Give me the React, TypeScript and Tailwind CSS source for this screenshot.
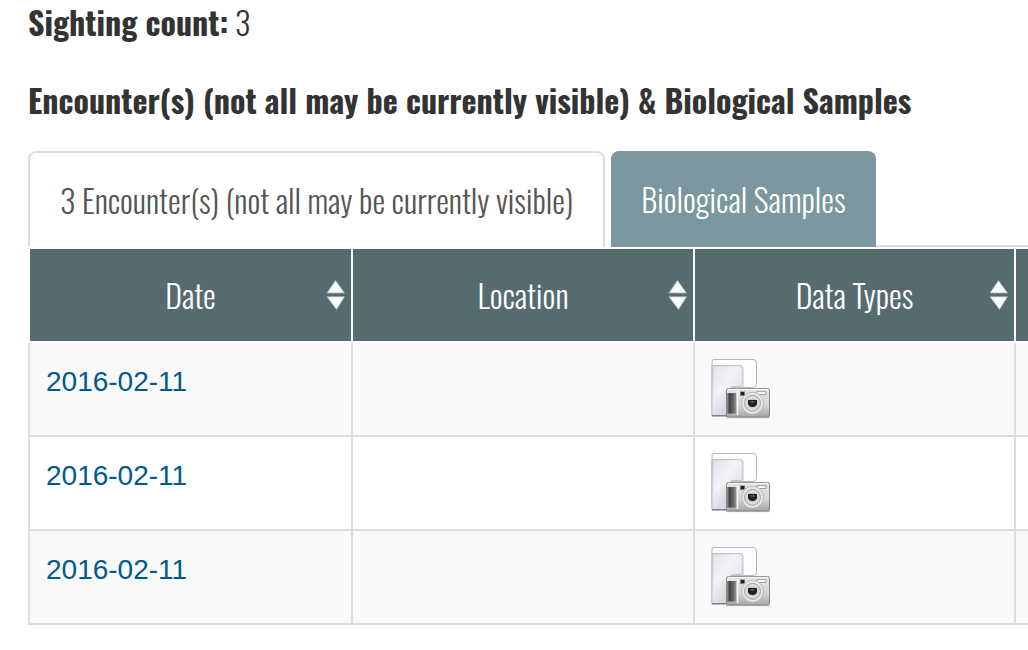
import { useState } from 'react'

const columns = ['Date', 'Location', 'Data Types']

const encounters = [
  { id: 1, date: '2016-02-11', location: '' },
  { id: 2, date: '2016-02-11', location: '' },
  { id: 3, date: '2016-02-11', location: '' },
]

const tabs = [
  { id: 'encounters', label: '3 Encounter(s) (not all may be currently visible)' },
  { id: 'samples', label: 'Biological Samples' },
]

function SortIcon() {
  return (
    <svg viewBox="0 0 20 30" className="h-[30px] w-5 justify-self-end" aria-hidden="true">
      <path d="M9.5 0.5 18.5 13H1z" fill="#fff" stroke="#a9b4b6" strokeWidth="0.8" />
      <path d="M1 16.8H18.5L10.5 29.5z" fill="#fff" stroke="#a9b4b6" strokeWidth="0.8" />
    </svg>
  )
}

function PhotoIcon({ id }: { id: number }) {
  return (
    <svg viewBox="11 9 60 60" className="block size-[60px]" role="img" aria-label="Photos">
      <defs>
        <linearGradient id={`page-${id}`} x1="0" y1="0" x2="1" y2="1">
          <stop offset="0" stopColor="#d0d0dc" />
          <stop offset="0.4" stopColor="#ececf2" />
          <stop offset="0.6" stopColor="#dcdce5" />
          <stop offset="1" stopColor="#cbcbd6" />
        </linearGradient>
        <linearGradient id={`body-${id}`} x1="0" y1="0" x2="0" y2="1">
          <stop offset="0" stopColor="#e6e6e6" />
          <stop offset="0.6" stopColor="#d4d4d4" />
          <stop offset="1" stopColor="#a6a6a6" />
        </linearGradient>
        <linearGradient id={`grip-${id}`} x1="0" y1="0" x2="1" y2="0">
          <stop offset="0" stopColor="#9a9a9a" />
          <stop offset="0.25" stopColor="#444444" />
          <stop offset="0.6" stopColor="#606060" />
          <stop offset="1" stopColor="#979797" />
        </linearGradient>
      </defs>
      {/* folder and sheet */}
      <path d="M12 65.5V11.5Q12 9.5 14 9.5H53Q56.5 9.5 56.5 13V34Q56.5 37.5 53 37.5H43V65.5z" fill="#fdfdff" stroke="#b4b4bf" />
      <path d="M12 65.5V15.5H40Q43 15.5 43 18.5V65.5z" fill={`url(#page-${id})`} stroke="#b8b8c6" strokeWidth="0.8" />
      <path d="M14 17H39Q41.5 17 41.5 20V35Q26 38 14 48z" fill="#fff" opacity="0.4" />
      <path d="M12 65.8H28" stroke="#77777f" strokeWidth="1.4" />
      {/* camera */}
      <rect x="26" y="66.4" width="44" height="1.8" rx="0.9" fill="#777" opacity="0.4" />
      <rect x="31" y="37" width="10" height="3" rx="1" fill="#ddd" stroke="#888" strokeWidth="0.7" />
      <rect x="26.5" y="38.5" width="43" height="28.5" rx="2" fill={`url(#body-${id})`} stroke="#858585" />
      <path d="M28 39.3H68" stroke="#fff" strokeWidth="0.8" />
      <rect x="27" y="43" width="9.5" height="20.5" fill={`url(#grip-${id})`} />
      <path d="M37.5 41V65" stroke="#f4f4f4" strokeWidth="1.5" />
      <rect x="40" y="41.5" width="5" height="4.5" fill="#777" />
      <rect x="41" y="42" width="3" height="3" fill="#222" />
      <rect x="57" y="41.7" width="9" height="2.8" fill="#f9f9f9" stroke="#858585" strokeWidth="0.7" />
      <circle cx="52.5" cy="53.3" r="11" fill="#e7e7e7" stroke="#b0b0b0" strokeWidth="0.8" />
      <circle cx="52.5" cy="53.3" r="8" fill="#d4d4d4" stroke="#a0a0a0" strokeWidth="0.9" />
      <circle cx="52.5" cy="53.3" r="5.8" fill="#c8c8c8" stroke="#f0f0f0" strokeWidth="0.7" />
      <path d="M48 50H57V54Q56 57 52.5 57T48 54z" fill="#202022" />
      <path d="M50.5 52H54.5" stroke="#8a8a90" strokeWidth="0.9" />
    </svg>
  )
}

export default function App() {
  const [active, setActive] = useState('encounters')

  return (
    <main className="overflow-hidden bg-white pb-6 pl-7 font-['Oswald','Roboto_Condensed','Liberation_Sans_Narrow','Liberation_Sans',sans-serif] text-[32px] font-light text-[#333]">
      <p className="leading-[44px]">
        <strong className="font-bold">Sighting count:</strong> 3
      </p>
      <h2 className="mt-[34px] leading-[44px] font-bold whitespace-nowrap">
        Encounter(s) (not all may be currently visible) &amp; Biological Samples
      </h2>

      <div className="mt-[29px] flex h-24" role="tablist">
        {tabs.map((tab) => (
          <button
            key={tab.id}
            type="button"
            role="tab"
            aria-selected={active === tab.id}
            onClick={() => setActive(tab.id)}
            className={
              active === tab.id
                ? 'mr-1.5 shrink-0 rounded-t-lg border-2 border-b-0 border-[#ddd] bg-white px-[30px] whitespace-nowrap text-[#555]'
                : 'shrink-0 rounded-t-lg bg-[#7a969f] px-[30px] whitespace-nowrap text-white'
            }
          >
            {tab.label}
          </button>
        ))}
        <div className="flex-1 border-b-2 border-[#ddd]" />
      </div>

      <table className="w-full table-fixed border-separate border-spacing-0">
        <colgroup>
          <col className="w-[323px]" />
          <col className="w-[342px]" />
          <col className="w-[321px]" />
          <col />
        </colgroup>
        <thead>
          <tr className="h-24 bg-[#566b70] text-white">
            {columns.map((name) => (
              <th key={name} className="border-y-2 border-l-2 border-white p-0 font-light">
                <button type="button" className="grid w-full grid-cols-[1fr_auto_1fr] items-center px-[5px]">
                  <span />
                  {name}
                  <SortIcon />
                </button>
              </th>
            ))}
            <th className="border-y-2 border-l-2 border-white p-0" />
          </tr>
        </thead>
        <tbody>
          {encounters.map((row) => (
            <tr key={row.id} className="align-top odd:bg-[#f9f9f9]">
              <td className="border-b-2 border-l-2 border-[#ddd] p-4">
                <a href="#" className="block font-['Liberation_Sans',sans-serif] text-[28px] leading-[46px] text-[#005a8c]">
                  {row.date}
                </a>
              </td>
              <td className="border-b-2 border-l-2 border-[#ddd] p-4">{row.location}</td>
              <td className="border-b-2 border-l-2 border-[#ddd] p-4">
                <PhotoIcon id={row.id} />
              </td>
              <td className="border-b-2 border-l-2 border-[#ddd] p-0" />
            </tr>
          ))}
        </tbody>
      </table>
    </main>
  )
}
